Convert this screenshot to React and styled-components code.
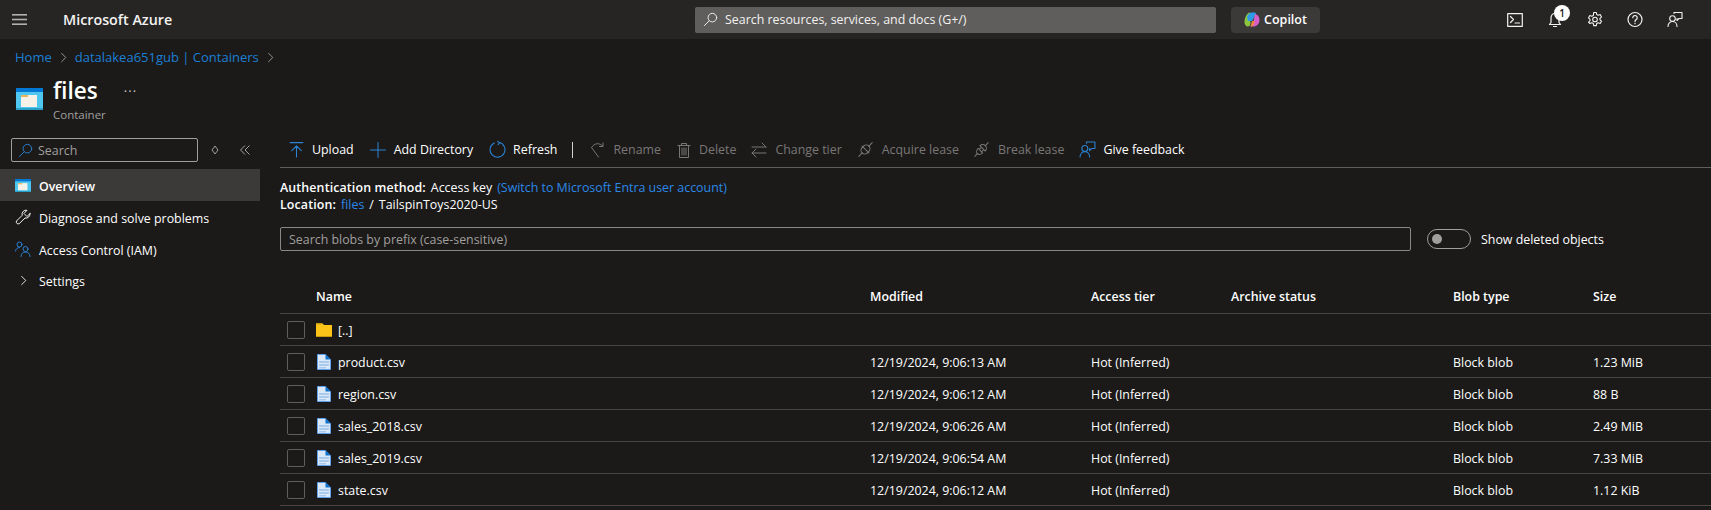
import React from "react";
import styled, { createGlobalStyle } from "styled-components";

const Global = createGlobalStyle`
  html, body { margin: 0; padding: 0; height: 510px; overflow: hidden; background: #1b1a19; }
  * { box-sizing: border-box; }
  body { font-family: "Open Sans", "Noto Sans", "Liberation Sans", sans-serif; font-size: 12.4px; color: #fff; }
`;

const Page = styled.div`width: 1711px; height: 510px; overflow: hidden; display: flex; flex-direction: column;`;
const TopBar = styled.header`height: 39px; background: #262524; display: flex; align-items: center; flex: none;`;
const Menu = styled.button`width: 63px; height: 39px; padding: 0 0 0 12px; background: none; border: 0; display: flex; align-items: center; color: #b3b0ad;`;
const Brand = styled.div`width: 632px; font-size: 14.3px; font-weight: 600; color: #f3f2f1;`;
const GlobalSearch = styled.div`width: 521px; height: 26px; background: #605e5c; border-radius: 2px; display: flex; align-items: center; gap: 7px; padding-left: 8px; font-size: 12.4px; color: #f3f2f1;`;
const CopilotBtn = styled.div`margin-left: 15px; width: 89px; height: 26px; background: #3b3a39; border-radius: 4px; display: flex; align-items: center; justify-content: center; gap: 4px; font-weight: 600; font-size: 12.5px;`;
const TopIcons = styled.div`margin-left: 187px; display: flex; align-items: center; gap: 24px; color: #f3f2f1;`;
const TopIcon = styled.div`position: relative; width: 16px; height: 18px; display: flex; align-items: center; justify-content: center;`;
const Badge = styled.span`position: absolute; top: -6px; left: 7px; width: 16px; height: 16px; border-radius: 50%; background: #fff; color: #1b1a19; font-size: 10px; font-weight: 600; display: flex; align-items: center; justify-content: center;`;

const Crumbs = styled.nav`height: 36px; padding: 0 0 0 15px; display: flex; align-items: center; gap: 6px; color: #1b7fd4; font-size: 13px; flex: none;`;
const CrumbSep = styled.span`display: flex; color: #a19f9d;`;
const Title = styled.div`height: 58px; display: flex; padding-left: 16px; flex: none;`;
const TitleIcon = styled.div`padding-top: 13px;`;
const TitleText = styled.div`margin-left: 10px; display: flex; flex-direction: column;`;
const TitleName = styled.div`font-size: 22.5px; line-height: 32px; font-weight: 600; width: 44px;`;
const TitleSub = styled.div`font-size: 11.5px; line-height: 16px; color: #a19f9d;`;
const Dots = styled.div`margin-left: 18px; color: #c8c6c4; font-size: 13px; line-height: 32px; letter-spacing: 1px;`;

const Body = styled.div`display: flex; flex: 1; min-height: 0;`;
const Side = styled.aside`width: 260px; flex: none; display: flex; flex-direction: column; margin-top: 5px;`;
const SideTop = styled.div`display: flex; align-items: center; padding-left: 11px; height: 24px; margin-bottom: 7px;`;
const SideSearch = styled.div`width: 187px; height: 24px; border: 1px solid #a19f9d; border-radius: 2px; display: flex; align-items: center; gap: 5px; padding-left: 6px; color: #a19f9d;`;
const SideCtl = styled.div`display: flex; margin-left: ${p => p.$ml}px; color: #a19f9d;`;
const NavItem = styled.div`height: ${p => p.$h || 32}px; display: flex; align-items: center; background: ${p => p.$on ? "#3b3a39" : "none"}; font-weight: ${p => p.$on ? 600 : 400}; padding: 2px 0 0 15px; gap: 8px; color: #fff;`;
const NavIcon = styled.div`width: 16px; height: 16px; margin-top: -2px; display: flex; align-items: center; justify-content: center; color: #f3f2f1;`;

const Main = styled.main`flex: 1; min-width: 0; padding-left: 20px;`;
const Toolbar = styled.div`height: 35px; border-bottom: 1px solid #605e5c; display: flex; align-items: center; padding: 0 0 1px 8px;`;
const Tool = styled.div`display: flex; align-items: center; gap: ${p => p.$g ?? 8}px; margin-right: ${p => p.$mr ?? 16}px; color: ${p => p.$off ? "#797775" : "#fff"}; white-space: nowrap;`;
const ToolSep = styled.div`width: 1px; height: 16px; background: #d2d0ce; margin: 0 17px 0 0;`;
const Info = styled.div`margin-top: 11px; line-height: 17px;`;
const InfoLine = styled.div`display: flex; gap: 5px; white-space: pre;`;
const Strong = styled.b`font-weight: 600; letter-spacing: .13px;`;
const Lnk = styled.span`color: #2b88e8;`;
const FilterRow = styled.div`margin-top: 14px; display: flex; align-items: center;`;
const Filter = styled.div`width: 1131px; height: 24px; border: 1px solid #8a8886; border-radius: 2px; padding-left: 8px; display: flex; align-items: center; color: #a19f9d;`;
const Toggle = styled.div`margin-left: 16px; width: 44px; height: 20px; border-radius: 10px; border: 1px solid #a19f9d; padding-left: 4px; display: flex; align-items: center;`;
const Knob = styled.div`width: 10px; height: 10px; border-radius: 50%; background: #a19f9d;`;
const ToggleLabel = styled.div`margin-left: 10px;`;

const cols = "36px 554px 221px 140px 222px 140px 1fr";
const Head = styled.div`margin-top: 29px; height: 34px; border-bottom: 1px solid #484644; display: grid; grid-template-columns: ${cols}; align-items: center; font-weight: 600;`;
const Row = styled.div`height: 32px; border-bottom: 1px solid #484644; padding-top: 2px; display: grid; grid-template-columns: ${cols}; align-items: center; color: #fff;`;
const Check = styled.div`margin: -2px 0 0 7px; width: 18px; height: 18px; border: 1px solid #605e5c; border-radius: 2px;`;
const NameCell = styled.div`display: flex; align-items: center; gap: 6px;`;
const CellIcon = styled.div`display: flex; margin-top: -2px;`;

const FolderGlyph = ({ w = 24, h = 24 }) => (
  <svg width={w} height={h} viewBox="0 0 27 22">
    <rect x="0" y="0" width="27" height="22" fill="#0078d4" />
    <rect x="0" y="4" width="27" height="18" fill="#50c7f0" />
    <rect x="0" y="20" width="27" height="2" fill="#2aa0c8" />
    <rect x="5" y="7" width="16" height="12" fill="#f6f2e8" />
    <rect x="5" y="7" width="7" height="2" fill="#e8b65c" />
  </svg>
);
const FileIcon = () => (
  <svg width="16" height="16" viewBox="0 0 16 16">
    <path d="M1.500.5h8l5 5v10h-13z" fill="#dbe9f7" stroke="#5ea0ef" />
    <path d="M9.500 0v5.500H15z" fill="#1172c8" />
    <rect x="3" y="7" width="10" height="2" fill="#a9c9ee" />
    <rect x="3" y="10" width="10" height="2" fill="#a9c9ee" />
    <rect x="3" y="13" width="7" height="1.500" fill="#a9c9ee" />
  </svg>
);
const Yellow = () => (
  <svg width="16" height="14" viewBox="0 0 16 14">
    <path d="M0 0h6l2 2h8v12H0z" fill="#fcc419" />
    <rect x="0" y="0" width="6" height="1.500" fill="#c89a10" />
    <rect x="0" y="13" width="16" height="1" fill="#c89a10" />
  </svg>
);
const S = ({ s = 16, children, c, w = 1, vb = "0 0 16 16" }) => (
  <svg width={s} height={s} viewBox={vb} fill="none" stroke={c || "currentColor"} strokeWidth={w} strokeLinecap="round" strokeLinejoin="round">{children}</svg>
);
const Chevron = () => <S s={11} vb="0 0 12 12"><path d="M4 1.500 8.500 6 4 10.500" /></S>;
const SearchIc = ({ c }) => <S s={15} c={c}><circle cx="10" cy="6" r="4.600" /><path d="M6.700 9.300 1.500 14.500" /></S>;
const PlugOn = () => (
  <S s={17} c="#797775"><g transform="rotate(45 8 8)"><path d="M8-1v4.500M8 12.500V17M3.500 8h9" /><rect x="4.500" y="3.500" width="7" height="9" rx="3.500" /></g></S>
);
const PlugOff = () => (
  <S s={17} c="#797775"><g transform="rotate(45 8 8)"><path d="M8-1v3.500M8 13.500V17M5.500 9.500h5M6.500 9.500V7M9.500 9.500V7" /><path d="M4.500 6.500a3.500 3.500 0 0 1 7 0zM5 9.500c0 2 1.300 4 3 4s3-2 3-4" /></g></S>
);
const Feedback = ({ c, w }) => (
  <S s={17} c={c} w={w}><path d="M7 2V1h8v6h-3l-2 2V7" /><circle cx="5.500" cy="7" r="2.800" /><path d="M1 15c0-3 2-5 4.500-5S10 12 10 15" /></S>
);

const files = [
  ["product.csv", "12/19/2024, 9:06:13 AM", "1.23 MiB"],
  ["region.csv", "12/19/2024, 9:06:12 AM", "88 B"],
  ["sales_2018.csv", "12/19/2024, 9:06:26 AM", "2.49 MiB"],
  ["sales_2019.csv", "12/19/2024, 9:06:54 AM", "7.33 MiB"],
  ["state.csv", "12/19/2024, 9:06:12 AM", "1.12 KiB"],
];

const BLUE = "#2a83d4";

export default function App() {
  return (
    <Page>
      <Global />
      <TopBar>
        <Menu><svg width="15" height="11" viewBox="0 0 15 11" fill="currentColor"><rect width="15" height="1.600" /><rect y="4.700" width="15" height="1.600" /><rect y="9.400" width="15" height="1.600" /></svg></Menu>
        <Brand>Microsoft Azure</Brand>
        <GlobalSearch><SearchIc />Search resources, services, and docs (G+/)</GlobalSearch>
        <CopilotBtn>
          <svg width="16" height="15" viewBox="0 0 16 15">
            <path d="M6 .5C3 1 1 5 .5 9c-.2 2 .5 5 3 5.500 2 .2 2.500-1 3-3z" fill="#8cc63f" />
            <path d="M3 5C4 2 6 .5 8 .5h3c1 0 1 1.500.5 2.500L8 9H4z" fill="#2f9be8" />
            <path d="M11 2c3 .5 4.500 3 4.500 6 0 4-3 6.500-6 6.500H5.500c2 0 3-1.500 3.500-3z" fill="#d85fc8" />
            <path d="M8 9h3l-2 4.500c-.5.700-1.500 1-2.500 1z" fill="#f0883e" />
          </svg>
          Copilot
        </CopilotBtn>
        <TopIcons>
          <TopIcon><S s={16} w={1.200}><rect x=".7" y="1.700" width="14.600" height="12.600" /><path d="m3.500 4.500 3 3-3 3M8 11h4.500" /></S></TopIcon>
          <TopIcon><S s={16} w={1.200}><path d="M8 1.500c3 0 4 2 4 5v4l1.500 2h-11L4 10.500v-4c0-3 1-5 4-5zM6.500 14.500h3" /></S><Badge>1</Badge></TopIcon>
          <TopIcon><S s={17} w={1.100}><circle cx="8" cy="8" r="2.300" /><path d="M6.700 1h2.600l.4 2 1.500.8 2-.7 1.300 2.300-1.500 1.400v1.500l1.500 1.400-1.300 2.300-2-.7-1.500.8-.4 2H6.700l-.4-2-1.500-.8-2 .7L1.500 10.700 3 9.300V7.800L1.500 6.400l1.300-2.300 2 .7 1.500-.8z" /></S></TopIcon>
          <TopIcon><S s={17} w={1.200}><circle cx="8" cy="8" r="7" /><path d="M5.800 6.200a2.200 2.200 0 1 1 3.400 1.900c-.8.500-1.200 1-1.200 2M8 11.800v.4" /></S></TopIcon>
          <TopIcon><Feedback w={1.100} /></TopIcon>
        </TopIcons>
      </TopBar>

      <Crumbs>
        <span>Home</span><CrumbSep><Chevron /></CrumbSep><span>datalakea651gub | Containers</span><CrumbSep><Chevron /></CrumbSep>
      </Crumbs>
      <Title>
        <TitleIcon><FolderGlyph w={27} h={22} /></TitleIcon>
        <TitleText>
          <TitleName>files</TitleName>
          <TitleSub>Container</TitleSub>
        </TitleText>
        <Dots>···</Dots>
      </Title>

      <Body>
        <Side>
          <SideTop>
            <SideSearch><SearchIc c={BLUE} />Search</SideSearch>
            <SideCtl $ml={12}><svg width="10" height="12" viewBox="0 0 10 12" fill="none" stroke="currentColor"><path d="M5 2 8 6 5 10 2 6z" /></svg></SideCtl>
            <SideCtl $ml={19}><svg width="12" height="12" viewBox="0 0 12 12" fill="none" stroke="currentColor"><path d="M6 1.500 1.500 6 6 10.500M10.500 1.500 6 6l4.500 4.500" /></svg></SideCtl>
          </SideTop>
          <NavItem $on><NavIcon><FolderGlyph w={16} h={13} /></NavIcon>Overview</NavItem>
          <NavItem><NavIcon><S s={16}><path d="M15 4.500 12 7.500 9 4.500l3-3.200a4 4 0 0 0-4.800 5L1.500 12a2 2 0 0 0 2.700 2.700L10 9a4 4 0 0 0 5-4.500z" /></S></NavIcon>Diagnose and solve problems</NavItem>
          <NavItem><NavIcon><S s={16} c={BLUE}><circle cx="4.500" cy="3.500" r="2.500" /><path d="M.500 10c0-2 2-3.500 4-3.500" /><circle cx="10.500" cy="8" r="2.500" /><path d="M6 15.500c0-3 2-4.500 4.500-4.500s4.500 1.500 4.500 4.500" /></S></NavIcon>Access Control (IAM)</NavItem>
          <NavItem $h={30}><NavIcon><Chevron /></NavIcon>Settings</NavItem>
        </Side>

        <Main>
          <Toolbar>
            <Tool $g={7}><S s={17} c={BLUE}><path d="M2 1.500h12M8 15V4.500M3.500 9 8 4.500 12.500 9" /></S>Upload</Tool>
            <Tool $g={8}><S s={16} c={BLUE}><path d="M8 .5v15M.5 8h15" /></S>Add Directory</Tool>
            <Tool $g={7} $mr={15}><S s={17} c={BLUE}><path d="M10 1.500A7 7 0 1 1 5 1.900M10 1.500 8 .3M10 1.500 8.500 3.500" /></S>Refresh</Tool>
            <ToolSep />
            <Tool $off $g={7} $mr={15}><S s={16} c="#797775"><path d="M1.500 5.500 8.500 15M2 5c2-4 8-4.500 10.500-1M13 1v3.500H9.500" /></S>Rename</Tool>
            <Tool $off $g={7} $mr={15}><S s={16} c="#797775"><path d="M2 3.500h12M5.500 3.500V1.500h5v2M3.500 3.500v12h9v-12M6 6v7M8 6v7M10 6v7" /></S>Delete</Tool>
            <Tool $off $mr={15}><S s={16} c="#797775"><path d="M1 5h14M11 1l4 4M15 11H1M5 7l-4 4 4 4" /></S>Change tier</Tool>
            <Tool $off $mr={14}><PlugOn />Acquire lease</Tool>
            <Tool $off $mr={15}><PlugOff />Break lease</Tool>
            <Tool $g={7}><Feedback c={BLUE} />Give feedback</Tool>
          </Toolbar>
          <Info>
            <InfoLine><Strong>Authentication method:</Strong><span>Access key</span><Lnk>(Switch to Microsoft Entra user account)</Lnk></InfoLine>
            <InfoLine><Strong>Location:</Strong><Lnk>files</Lnk><span>/</span><span>TailspinToys2020-US</span></InfoLine>
          </Info>
          <FilterRow>
            <Filter>Search blobs by prefix (case-sensitive)</Filter>
            <Toggle><Knob /></Toggle>
            <ToggleLabel>Show deleted objects</ToggleLabel>
          </FilterRow>
          <Head>
            <span /><span>Name</span><span>Modified</span><span>Access tier</span><span>Archive status</span><span>Blob type</span><span>Size</span>
          </Head>
          <Row><Check /><NameCell><CellIcon><Yellow /></CellIcon><span>[..]</span></NameCell></Row>
          {files.map(([n, m, s]) => (
            <Row key={n}>
              <Check />
              <NameCell><CellIcon><FileIcon /></CellIcon><span>{n}</span></NameCell>
              <span>{m}</span><span>Hot (Inferred)</span><span /><span>Block blob</span><span>{s}</span>
            </Row>
          ))}
        </Main>
      </Body>
    </Page>
  );
}
